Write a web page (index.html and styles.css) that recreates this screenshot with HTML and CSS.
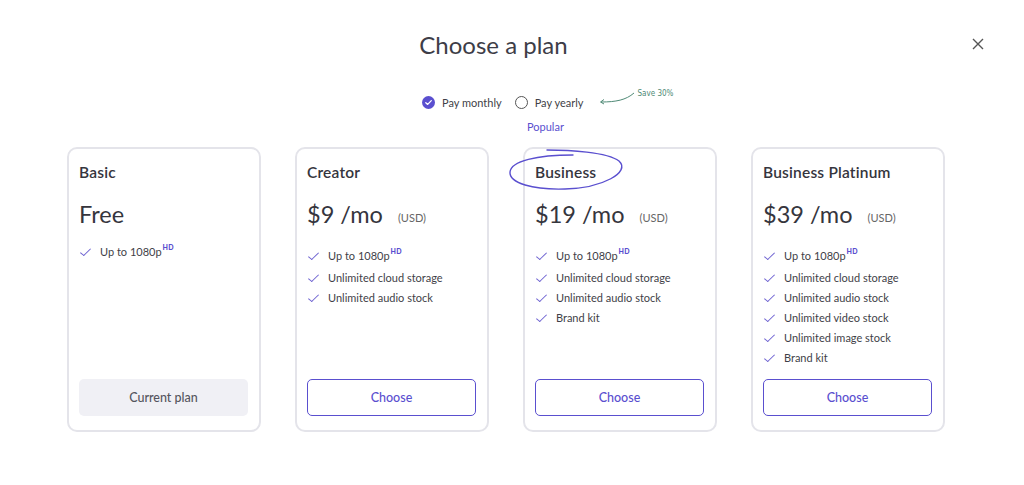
FILE: index.html
```html
<!DOCTYPE html>
<html>
<head>
<meta charset="utf-8">
<link rel="stylesheet" href="styles.css">
</head>
<body>
<div class="modal">
  <header class="head">
    <h1 class="title">Choose a plan</h1>
    <button class="close" aria-label="Close">
      <svg width="12" height="12" viewBox="0 0 12 12"><path d="M1 1L11 11M11 1L1 11" stroke="#555" stroke-width="1.4" fill="none"/></svg>
    </button>
  </header>

  <div class="billing">
    <label class="opt">
      <span class="radio on"><svg width="13" height="13" viewBox="0 0 13 13"><circle cx="6.5" cy="6.5" r="6.5" fill="#5a4fcf"/><path d="M3.8 6.7L5.7 8.4L9.3 4.6" stroke="#fff" stroke-width="1.3" fill="none" stroke-linecap="round" stroke-linejoin="round"/></svg></span>
      Pay monthly
    </label>
    <label class="opt">
      <span class="radio"></span>
      Pay yearly
    </label>
    <span class="save">
      <svg class="arrow" width="38" height="16" viewBox="0 0 38 16"><path d="M36 2C28 9 18 11 3 11" stroke="#4f8a76" stroke-width="1" fill="none"/><path d="M6 8.5L2.5 11L6 13" stroke="#4f8a76" stroke-width="1" fill="none"/></svg>
      <span class="save-text">Save 30%</span>
    </span>
  </div>

  <div class="plans">
    <div class="col">
      <div class="tag"></div>
      <div class="card">
        <h2 class="name">Basic</h2>
        <div class="price">Free</div>
        <ul class="feats">
          <li><span class="chk"></span><span>Up to 1080p<sup>HD</sup></span></li>
        </ul>
        <button class="btn current">Current plan</button>
      </div>
    </div>

    <div class="col">
      <div class="tag"></div>
      <div class="card">
        <h2 class="name">Creator</h2>
        <div class="price">$9 /mo <span class="cur">(USD)</span></div>
        <ul class="feats">
          <li><span class="chk"></span><span>Up to 1080p<sup>HD</sup></span></li>
          <li><span class="chk"></span><span>Unlimited cloud storage</span></li>
          <li><span class="chk"></span><span>Unlimited audio stock</span></li>
        </ul>
        <button class="btn">Choose</button>
      </div>
    </div>

    <div class="col">
      <div class="tag popular">Popular</div>
      <div class="card">
        <svg class="circle" width="120" height="46" viewBox="0 0 120 46"><path d="M40 3C62 3 100 5 112 14C124 25 96 41 58 42C26 43 2 36 3 25C4 14 30 8 66 8" stroke="#5a4fcf" stroke-width="1.4" fill="none" stroke-linecap="round"/></svg>
        <h2 class="name">Business</h2>
        <div class="price">$19 /mo <span class="cur">(USD)</span></div>
        <ul class="feats">
          <li><span class="chk"></span><span>Up to 1080p<sup>HD</sup></span></li>
          <li><span class="chk"></span><span>Unlimited cloud storage</span></li>
          <li><span class="chk"></span><span>Unlimited audio stock</span></li>
          <li><span class="chk"></span><span>Brand kit</span></li>
        </ul>
        <button class="btn">Choose</button>
      </div>
    </div>

    <div class="col">
      <div class="tag"></div>
      <div class="card">
        <h2 class="name">Business Platinum</h2>
        <div class="price">$39 /mo <span class="cur">(USD)</span></div>
        <ul class="feats">
          <li><span class="chk"></span><span>Up to 1080p<sup>HD</sup></span></li>
          <li><span class="chk"></span><span>Unlimited cloud storage</span></li>
          <li><span class="chk"></span><span>Unlimited audio stock</span></li>
          <li><span class="chk"></span><span>Unlimited video stock</span></li>
          <li><span class="chk"></span><span>Unlimited image stock</span></li>
          <li><span class="chk"></span><span>Brand kit</span></li>
        </ul>
        <button class="btn">Choose</button>
      </div>
    </div>
  </div>
</div>
</body>
</html>
```
FILE: styles.css
```css
* { box-sizing: border-box; }
html, body { margin: 0; padding: 0; background: #fff; }
body {
  font-family: Lato, "Noto Sans", sans-serif;
  color: #3f3f48;
  width: 1024px;
  height: 485px;
  overflow: hidden;
}
.modal { width: 1024px; }

.head {
  position: relative;
  height: 67px;
  padding-top: 30px;
}
.title {
  margin: 0;
  font-weight: 400;
  font-size: 24px;
  line-height: 30px;
  text-align: center;
  padding-right: 37px;
  color: #3d3d47;
}
.close {
  position: absolute;
  right: 40px;
  top: 38px;
  border: 0;
  background: none;
  padding: 0;
  width: 12px;
  height: 12px;
}

.billing {
  display: flex;
  align-items: center;
  height: 28px;
  margin-top: 21px;
  padding-left: 422px;
  font-size: 11px;
  color: #3f3f48;
}
.opt {
  display: flex;
  align-items: center;
  gap: 7px;
  margin-right: 13px;
}
.opt + .opt { margin-right: 15px; }
.radio {
  width: 13px;
  height: 13px;
  border-radius: 50%;
  border: 1.3px solid #555;
  display: inline-block;
}
.radio.on { border: 0; }
.radio svg { display: block; }
.save {
  display: flex;
  align-items: flex-start;
  margin-top: -8px;
}
.arrow { margin-top: 2px; }
.save-text {
  font-family: "DejaVu Sans Condensed", "Liberation Sans Narrow", sans-serif;
  font-size: 8px;
  color: #4f8a76;
  margin-left: 1px;
  margin-top: 0;
}

.plans {
  display: flex;
  gap: 34px;
  padding-left: 67px;
}
.col {
  width: 194px;
  display: flex;
  flex-direction: column;
}
.tag {
  height: 31px;
  padding-top: 4px;
  font-size: 11px;
  line-height: 14px;
}
.popular {
  color: #5a4fcf;
  padding-left: 4px;
}
.card {
  position: relative;
  height: 285px;
  border: 2.5px solid #e4e4ea;
  border-radius: 10px;
  padding: 13px 11px 14px 10px;
  display: flex;
  flex-direction: column;
}
.circle {
  position: absolute;
  left: -18px;
  top: -2px;
}
.name {
  margin: 0;
  font-size: 15.5px;
  font-weight: 600;
  line-height: 20px;
  color: #35353d;
  letter-spacing: 0.2px;
}
.price {
  margin-top: 17px;
  font-size: 23.5px;
  line-height: 30px;
  color: #35353d;
}
.cur {
  font-size: 11px;
  color: #666;
  margin-left: 9px;
  vertical-align: 1px;
}
.feats {
  list-style: none;
  margin: 13px 0 0;
  padding: 0;
  font-size: 11px;
  color: #3f3f48;
}
.feats li {
  height: 20px;
  line-height: 20px;
  display: flex;
  align-items: center;
  padding-left: 2px;
}
.feats li:first-child { margin-bottom: 2px; }
.chk {
  width: 11px;
  height: 8px;
  margin-right: 8px;
  flex: none;
  position: relative;
}
.chk::before {
  content: "";
  position: absolute;
  left: 2px;
  top: -2px;
  width: 4px;
  height: 9px;
  border-right: 1.2px solid #7065d2;
  border-bottom: 1.2px solid #7065d2;
  transform: rotate(40deg) skewX(-6deg);
}
sup {
  font-size: 7px;
  font-weight: 900;
  color: #5a4fcf;
  vertical-align: 6px;
  line-height: 0;
  margin-left: 1px;
  letter-spacing: 0.3px;
}
.btn {
  margin-top: auto;
  height: 37px;
  width: 100%;
  border: 1.3px solid #5a4fcf;
  border-radius: 5px;
  background: #fff;
  color: #5a4fcf;
  font-family: Lato, "Noto Sans", sans-serif;
  font-size: 12.5px;
  font-weight: 500;
}
.btn.current {
  border: 0;
  background: #f0f0f5;
  color: #55555e;
}
```
